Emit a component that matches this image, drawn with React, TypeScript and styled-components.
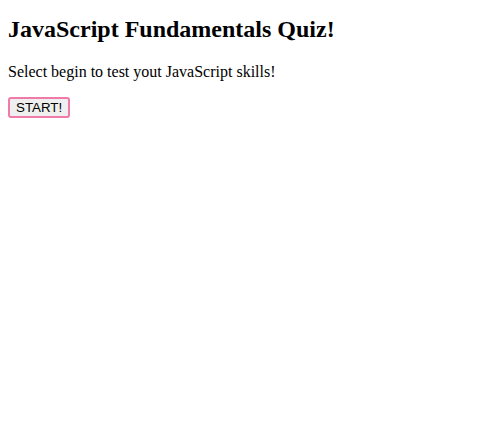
import React from "react";
import styled, { createGlobalStyle } from "styled-components";

const Global = createGlobalStyle`
  body {
    margin: 8px;
    font-family: "Liberation Serif", "Times New Roman", serif;
    background: #ffffff;
    color: #000000;
  }
`;

const Title = styled.h2`
  font-size: 24px;
  font-weight: bold;
  margin: 8px 0 20px;
`;

const Intro = styled.p`
  font-size: 16px;
  margin: 0 0 15.5px;
`;

const StartButton = styled.button`
  font-family: "Liberation Sans", Arial, sans-serif;
  font-size: 13.333px;
  color: #000;
  background: #efefef;
  border: 2px solid #f07aa8;
  border-radius: 3px;
  padding: 1px 6px;
  cursor: pointer;
`;

export default function App() {
  return (
    <>
      <Global />
      <Title>JavaScript Fundamentals Quiz!</Title>
      <Intro>Select begin to test yout JavaScript skills!</Intro>
      <StartButton>START!</StartButton>
    </>
  );
}
